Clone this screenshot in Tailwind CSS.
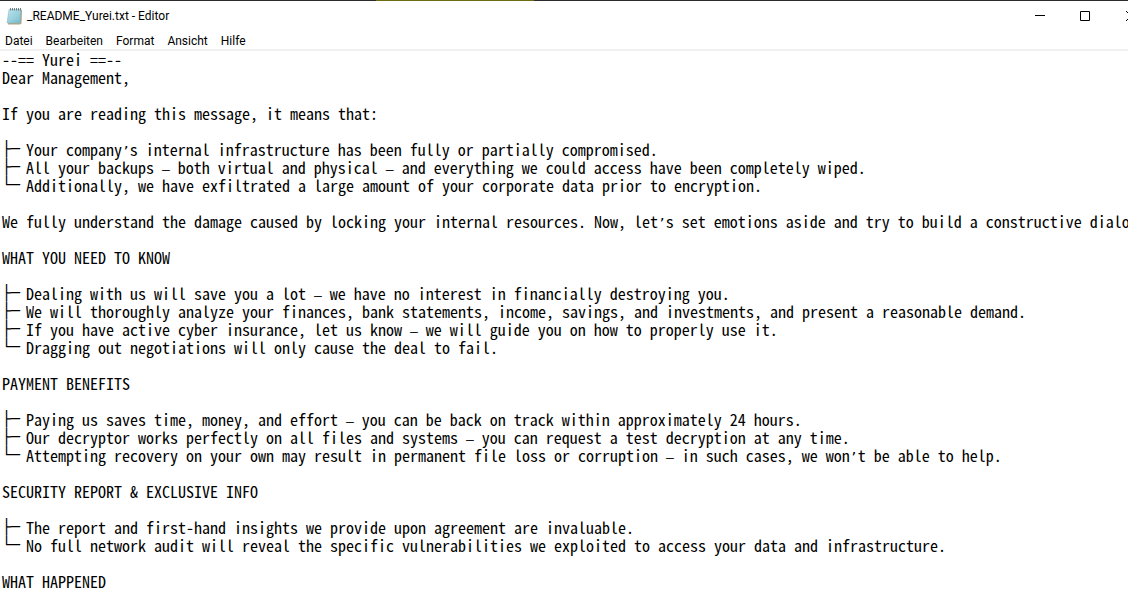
<!DOCTYPE html>
<html lang="de">

<head>
  <meta charset="UTF-8">
  <meta name="viewport" content="width=device-width, initial-scale=1.0">
  <title>_README_Yurei.txt - Editor</title>
  <script src="https://cdn.jsdelivr.net/npm/@tailwindcss/browser@4"></script>
</head>

<body class="h-screen flex flex-col overflow-hidden bg-white text-black font-[Roboto,sans-serif] text-[12px]">
  <!-- strip of the desktop above the window -->
  <div class="h-px shrink-0 bg-[#2d2b2d] flex">
    <div class="w-1/3"></div>
    <div class="w-[14%] bg-[#6c6d12]"></div>
  </div>

  <header class="h-[30px] shrink-0 flex items-center pl-[6px]">
    <svg class="w-4 h-[17px] mr-[5px]" viewBox="0 0 16 17" aria-hidden="true">
      <defs>
        <linearGradient id="page" x1="0" y1="0" x2="1" y2="1">
          <stop offset="0" stop-color="#c4e9f0" />
          <stop offset="1" stop-color="#6fb9cb" />
        </linearGradient>
      </defs>
      <path d="M4 2h12l-.5 13.500-1.500 1H2z" fill="#b3a283" />
      <path d="M3 1.500h12l-1 13.500H1z" fill="url(#page)" stroke="#7fb4c0" stroke-width=".5" />
      <path d="M4 5h10M3.500 7h10M3.500 9h10M3 11h10" stroke="#a5d5df" stroke-width=".5" />
      <path d="M4.500 0v2.500M6.500 0v2.500M8.500 0v2.500M10.500 0v2.500M12.500 0v2.500M14.500 0v2.500" stroke="#536369" stroke-width=".8" />
    </svg>
    <h1 class="flex-1 whitespace-nowrap">_README_Yurei.txt - Editor</h1>
    <!-- the window runs past the right edge of the screen -->
    <div class="flex h-full -mr-[26px]">
      <button class="w-[45px] grid place-items-center hover:bg-[#e5e5e5]" aria-label="Minimieren">
        <svg class="w-[10px] h-[10px]" viewBox="0 0 10 10" fill="none" stroke="#000"><path d="M0 4.500h10" /></svg>
      </button>
      <button class="w-[46px] grid place-items-center hover:bg-[#e5e5e5]" aria-label="Maximieren">
        <svg class="w-[10px] h-[10px]" viewBox="0 0 10 10" fill="none" stroke="#000"><path d="M.5.5h9v9h-9z" /></svg>
      </button>
      <button class="w-[46px] grid place-items-center hover:bg-[#e81123]" aria-label="Schließen">
        <svg class="w-[10px] h-[10px]" viewBox="0 0 10 10" fill="none" stroke="#000"><path d="M0 0l10 10M10 0L0 10" /></svg>
      </button>
    </div>
  </header>

  <nav class="h-5 shrink-0 flex items-center gap-[13px] pt-[2px] px-[5px] border-b-2 border-[#f0f0f0]">
    <button>Datei</button>
    <button>Bearbeiten</button>
    <button>Format</button>
    <button>Ansicht</button>
    <button>Hilfe</button>
  </nav>

  <!-- <i> holds the tree branches, <span> the one-cell dashes and apostrophes -->
  <div role="textbox" aria-multiline="true" aria-label="Text-Editor" contenteditable="true" spellcheck="false"
    class="flex-1 min-h-0 w-full -mt-px pl-[2px] overflow-hidden outline-none whitespace-pre font-['Noto_Sans_Mono_CJK_JP','DejaVu_Sans_Mono',monospace] text-[16px] leading-[18px] [&_i]:inline-block [&_i]:align-top [&_i]:w-4 [&_i]:h-[18px] [&_i]:not-italic [&_i]:text-[15px] [&_i]:font-['DejaVu_Sans_Mono',monospace] [&_span]:leading-[0] [&_span]:text-[13px] [&_span]:font-['DejaVu_Sans_Mono',monospace]">--== Yurei ==--
Dear Management,

If you are reading this message, it means that:

<i>├─</i> Your company<span>’</span>s internal infrastructure has been fully or partially compromised.
<i>├─</i> All your backups <span>—</span> both virtual and physical <span>—</span> and everything we could access have been completely wiped.
<i>└─</i> Additionally, we have exfiltrated a large amount of your corporate data prior to encryption.

We fully understand the damage caused by locking your internal resources. Now, let<span>’</span>s set emotions aside and try to build a constructive dialogue.

WHAT YOU NEED TO KNOW

<i>├─</i> Dealing with us will save you a lot <span>—</span> we have no interest in financially destroying you.
<i>├─</i> We will thoroughly analyze your finances, bank statements, income, savings, and investments, and present a reasonable demand.
<i>├─</i> If you have active cyber insurance, let us know <span>—</span> we will guide you on how to properly use it.
<i>└─</i> Dragging out negotiations will only cause the deal to fail.

PAYMENT BENEFITS

<i>├─</i> Paying us saves time, money, and effort <span>—</span> you can be back on track within approximately 24 hours.
<i>├─</i> Our decryptor works perfectly on all files and systems <span>—</span> you can request a test decryption at any time.
<i>└─</i> Attempting recovery on your own may result in permanent file loss or corruption <span>—</span> in such cases, we won<span>’</span>t be able to help.

SECURITY REPORT &amp; EXCLUSIVE INFO

<i>├─</i> The report and first-hand insights we provide upon agreement are invaluable.
<i>└─</i> No full network audit will reveal the specific vulnerabilities we exploited to access your data and infrastructure.

WHAT HAPPENED
</div>
</body>

</html>
